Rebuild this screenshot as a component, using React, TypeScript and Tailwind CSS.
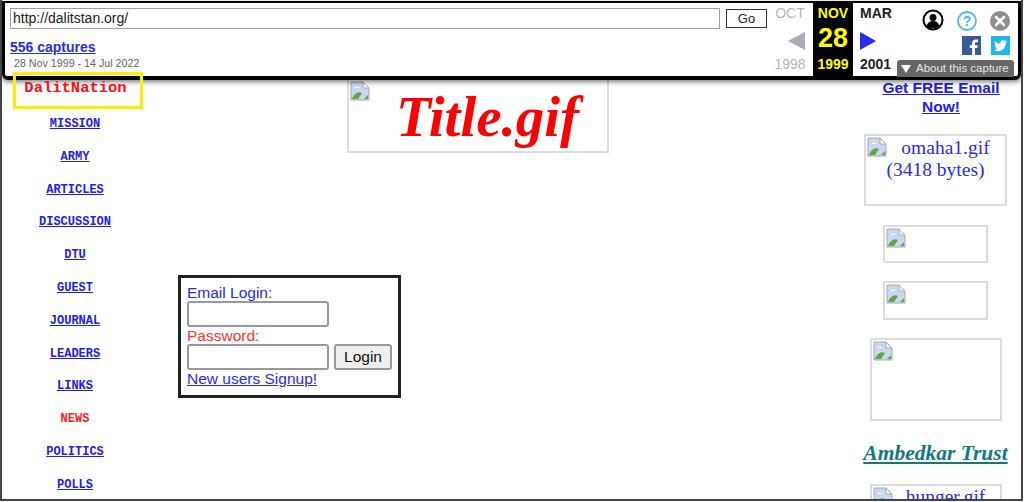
const NAV_LINKS = ['MISSION', 'ARMY', 'ARTICLES', 'DISCUSSION', 'DTU', 'GUEST', 'JOURNAL', 'LEADERS', 'LINKS', 'NEWS', 'POLITICS', 'POLLS']

function BrokenIcon() {
  return (
    <svg width="20" height="20" viewBox="0 0 20 20" className="shrink-0">
      <path d="M1 1h12l6 6v12H1z" fill="#c9d8f2" stroke="#a9a9a9" strokeWidth="1" />
      <path d="M13 1v6h6z" fill="#fff" stroke="#a9a9a9" strokeWidth="1" />
      <path d="M2 18c2-6 7-8 10-6l-4 6z" fill="#5fa83c" />
      <path d="M14 18l4-4v4z" fill="#5fa83c" />
      <path d="M4 7c2-2 4-2 6 0z" fill="#fff" />
    </svg>
  )
}

function ImgBox({ className, children }: { className: string; children?: React.ReactNode }) {
  return (
    <div className={`shrink-0 border-2 border-[#dcdcdc] p-px ${className}`}>
      <BrokenIcon />
      {children}
    </div>
  )
}

function Toolbar() {
  return (
    <div className="relative z-10 mt-px flex h-[79px] shrink-0 rounded-b-[6px] border-x-[3px] border-t-[2px] border-b-[4px] border-black bg-white shadow-[0_2px_5px_rgba(0,0,0,0.5)] font-['Liberation_Sans',sans-serif]">
      {/* url + captures */}
      <div className="flex w-[808px] shrink-0 pl-[5px]">
        <div className="w-[762px] shrink-0 pt-[5px]">
          <div className="flex items-start">
            <input
              readOnly
              value="http://dalitstan.org/"
              className="h-[21px] w-[710px] border border-[#a0a0a0] px-0.5 text-[14px] text-[#222]"
            />
            <button className="ml-1.5 mt-px h-[19px] w-[41px] border border-[#333] bg-white text-[13px] leading-none text-[#222]">Go</button>
          </div>
          <a className="mt-[8px] block text-[14px] font-bold leading-[20px] text-[#2a2af0] underline">556 captures</a>
          <div className="ml-1 -mt-[1px] text-[10.7px] leading-[14px] text-[#666]">28 Nov 1999 - 14 Jul 2022</div>
        </div>

        {/* previous capture */}
        <div className="flex w-[36px] shrink-0 flex-col items-center pt-[3px] text-[14px] leading-none text-[#b4b4bc]">
          <span>OCT</span>
          <svg width="17" height="18" viewBox="0 0 17 18" className="mr-[3px] mt-[12px] shrink-0 self-end">
            <path d="M17 0v18L0 9z" fill="#a9adb5" />
          </svg>
          <span className="mt-[7px]">1998</span>
        </div>
      </div>

      {/* current date */}
      <div className="-mt-0.5 -mb-1 flex h-[76px] w-[40px] shrink-0 flex-col items-center bg-black font-bold text-[#ffff00]">
        <span className="mt-[4px] text-[14px] leading-4">NOV</span>
        <span className="mt-[3px] text-[27px] leading-[29px]">28</span>
        <span className="mt-[3px] text-[14px] leading-4">1999</span>
      </div>

      {/* next capture */}
      <div className="ml-[7px] flex w-[32px] shrink-0 flex-col items-start pt-[3px] text-[14px] font-bold leading-none text-[#222]">
        <span>MAR</span>
        <svg width="16" height="18" viewBox="0 0 16 18" className="mt-[12px] shrink-0">
          <path d="M0 0v18l16-9z" fill="#2a2af0" />
        </svg>
        <span className="mt-[7px]">2001</span>
      </div>

      {/* account + share */}
      <div className="ml-[30px] mt-[6px]">
        <svg width="22" height="22" viewBox="0 0 22 22">
          <circle cx="11" cy="11" r="9.5" fill="#fff" stroke="#000" strokeWidth="2" />
          <circle cx="11" cy="8.5" r="3.5" fill="#000" />
          <path d="M4.500 17c1-3.500 3.500-5 6.500-5s5.500 1.500 6.500 5c-3 3-10 3-13 0z" fill="#000" />
        </svg>
      </div>
      <div className="ml-[13px] mt-[8px] flex w-[53px] flex-col">
        <div className="flex justify-between">
          <svg width="20" height="20" viewBox="0 0 20 20">
            <circle cx="10" cy="10" r="9" fill="#fff" stroke="#4db5ec" strokeWidth="1.800" />
            <text x="10" y="15" textAnchor="middle" fontSize="14" fontWeight="700" fill="#4db5ec" fontFamily="Liberation Sans">?</text>
          </svg>
          <svg width="20" height="20" viewBox="0 0 20 20">
            <circle cx="10" cy="10" r="10" fill="#8f8f8f" />
            <path d="M6 6l8 8M14 6l-8 8" stroke="#fff" strokeWidth="2.500" strokeLinecap="round" />
          </svg>
        </div>
        <div className="mt-[5px] flex justify-end gap-[10px]">
          <svg width="19" height="19" viewBox="0 0 19 19">
            <rect width="19" height="19" fill="#3b5a9a" />
            <path d="M13 19v-7h2.300l.4-2.800H13V7.500c0-.8.3-1.300 1.400-1.300H16V3.700c-.3 0-1.200-.1-2.200-.1-2.200 0-3.700 1.300-3.700 3.700v1.900H7.700V12h2.400v7z" fill="#fff" />
          </svg>
          <svg width="19" height="19" viewBox="0 0 19 19">
            <rect width="19" height="19" fill="#1fb6ee" />
            <path d="M16 5.500c-.5.200-1 .4-1.500.4.500-.3 1-.8 1.200-1.400-.5.300-1.100.5-1.700.6a2.700 2.700 0 0 0-4.600 2.500C7.200 7.500 5.200 6.500 3.900 4.900c-.7 1.200-.4 2.800.8 3.600-.4 0-.8-.1-1.200-.3 0 1.300.9 2.400 2.100 2.700-.4.100-.8.100-1.200 0 .3 1.100 1.300 1.800 2.500 1.900A5.400 5.400 0 0 1 3 13.900a7.600 7.600 0 0 0 11.700-6.800c.5-.4.900-1 1.300-1.600z" fill="#fff" />
          </svg>
        </div>
      </div>

      {/* about pill sits over the toolbar edge */}
      <div className="absolute right-[4px] top-[57px] flex h-[17px] w-[117px] items-center whitespace-nowrap rounded-t-[3px] bg-[#666] pl-[4px] text-[11.5px] text-[#e6e6e6]">
        <svg width="10" height="8" viewBox="0 0 10 8" className="mr-[5px] shrink-0">
          <path d="M0 0h10L5 8z" fill="#fff" />
        </svg>
        About this capture
      </div>
    </div>
  )
}

export default function App() {
  return (
    <div className="relative h-[502px] w-[1024px] overflow-hidden bg-white">
      <div className="relative flex h-[501px] w-[1023px] flex-col overflow-hidden border-2 border-t-0 border-[#444] bg-white">
        <Toolbar />

        <div className="flex min-h-0 flex-1">
          {/* left nav */}
          <div className="w-[146px] shrink-0 pt-[38px] text-center font-['Liberation_Mono',monospace] text-[12px] font-bold leading-[13px]">
            {NAV_LINKS.map((label) => (
              <div key={label} className="mb-[19.8px]">
                {label === 'NEWS' ? (
                  <span className="text-[#ff2020]">{label}</span>
                ) : (
                  <a className="text-[#2020ee] underline">{label}</a>
                )}
              </div>
            ))}
          </div>

          {/* centre */}
          <div className="w-[702px] shrink-0">
            <ImgBox className="relative -mt-[2px] ml-[199px] h-[75px] w-[262px] border">
              <div className="-mt-[18px] pl-[46px] font-['Liberation_Serif',serif] text-[57px] font-bold italic leading-[68px] text-[#ff0000]">Title.gif</div>
            </ImgBox>
            <div className="ml-[30px] mt-[122px] h-[123px] w-[223px] border-[3px] border-[#222] bg-white pl-[6px] pt-[6px] font-['Liberation_Sans',sans-serif] text-[15.5px] leading-[18px]">
              <div className="text-[#2a2af0]">Email Login:</div>
              <input readOnly className="-mt-[1px] block h-[26px] w-[142px] rounded-[3px] border-2 border-[#999]" />
              <div className="text-[#ff3030]">Password:</div>
              <div className="-mt-[1px] flex items-start gap-[5px]">
                <input readOnly className="h-[26px] w-[142px] rounded-[3px] border-2 border-[#999]" />
                <button className="h-[26px] w-[58px] rounded-[3px] border-2 border-[#999] bg-[#efefef] text-[15.5px] leading-none text-[#111]">Login</button>
              </div>
              <a className="block text-[#2a2af0] underline">New users Signup!</a>
            </div>
          </div>

          {/* right column */}
          <div className="flex w-[171px] shrink-0 flex-col items-center">
            <a className="-mt-[2px] ml-[11px] whitespace-nowrap text-center font-['Liberation_Sans',sans-serif] text-[15.5px] font-bold leading-[19px] text-[#2020ee] underline">
              Get FREE Email
              <br />
              Now!
            </a>
            <ImgBox className="relative mt-[18px] h-[72px] w-[143px] border font-['Liberation_Serif',serif] text-[19.5px] leading-[22px] text-[#2a2af0]">
              <div className="-mt-[20px] text-center">
                <span className="pl-[20px]">omaha1.gif</span>
                <br />
                (3418 bytes)
              </div>
            </ImgBox>
            <ImgBox className="mt-[19px] h-[38px] w-[105px] border" />
            <ImgBox className="mt-[18px] h-[39px] w-[105px] border" />
            <ImgBox className="mt-[18px] h-[83px] w-[132px] border" />
            <a className="mt-[20px] whitespace-nowrap font-['Liberation_Serif',serif] text-[21.5px] font-bold italic leading-[24px] text-[#127a78] underline">Ambedkar Trust</a>
            <ImgBox className="mt-[19px] h-[40px] w-[132px] border font-['Liberation_Serif',serif] text-[19.5px] leading-[22px] text-[#2a2af0]">
              <div className="-mt-[21px] pl-[20px] text-center">hunger.gif</div>
            </ImgBox>
          </div>
        </div>

        {/* highlight drawn over the page */}
        <div className="absolute left-[11px] top-[72px] z-20 h-[37px] w-[130px] border-[3px] border-[#ffee00] pr-[5px] pt-[5px] text-center font-['Liberation_Mono',monospace] text-[15.5px] font-bold leading-[16px] text-[#ff1010]">
          DalitNation
        </div>
      </div>
    </div>
  )
}
